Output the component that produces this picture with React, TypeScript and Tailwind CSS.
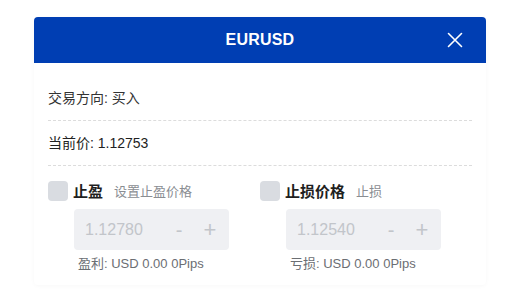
const font = {
  fontFamily: '"Liberation Sans", "Noto Sans CJK SC", sans-serif',
}

function CloseIcon() {
  return (
    <svg width="16" height="16" viewBox="0 0 16 16" fill="none">
      <path
        d="M1.5 1.5L14.5 14.5M14.5 1.5L1.5 14.5"
        stroke="white"
        strokeWidth="1.6"
        strokeLinecap="round"
      />
    </svg>
  )
}

interface OrderFieldProps {
  label: string
  hint: string
  value: string
  result: string
}

function OrderField({ label, hint, value, result }: OrderFieldProps) {
  return (
    <div className="flex flex-col">
      <div className="flex items-center">
        <span className="w-5 h-5 rounded-[4px] bg-[#d9dce1]" />
        <span className="ml-[5px] text-[15px] leading-5 font-bold text-[#1f1f1f] mt-[3px]">
          {label}
        </span>
        <span className="ml-[11px] text-[13px] leading-5 text-[#8a8d92] mt-[3px]">
          {hint}
        </span>
      </div>

      <div className="ml-[26px] mt-[7px] w-[155px] h-[41px] rounded-[4px] bg-[#eff0f3] flex items-center pl-[11px] pr-[9px]">
        <span className="flex-1 text-[16px] text-[#c2c5ca]">{value}</span>
        <span className="text-[20px] leading-none text-[#c2c5ca] w-5 text-center">
          -
        </span>
        <span className="ml-[11px] text-[22px] leading-none text-[#c2c5ca] w-5 text-center">
          +
        </span>
      </div>

      <p className="ml-[30px] mt-[5px] text-[13px] leading-[18px] text-[#6b6e73]">
        {result}
      </p>
    </div>
  )
}

export default function App() {
  return (
    <div className="w-[520px] h-[302px] bg-white pt-[17px] pl-[34px]" style={font}>
      <div className="w-[452px] bg-white shadow-[0_1px_4px_rgba(0,0,0,0.03)] rounded-[4px]">
        <header className="relative h-[46px] rounded-t-[4px] bg-[#003eb3] flex items-center justify-center">
          <h2 className="text-white text-[16px] font-bold tracking-[0.2px]">
            EURUSD
          </h2>
          <button className="absolute right-[23px] top-[15px]">
            <CloseIcon />
          </button>
        </header>

        <div className="px-[14px] pt-[13px] pb-[12px]">
          <div className="py-3 border-b border-dashed border-[#dcdcdc] text-[14px] leading-5 text-[#333]">
            交易方向: 买入
          </div>
          <div className="py-3 border-b border-dashed border-[#dcdcdc] text-[14px] leading-5 text-[#222]">
            当前价: 1.12753
          </div>

          <div className="grid grid-cols-2 mt-[13px]">
            <OrderField
              label="止盈"
              hint="设置止盈价格"
              value="1.12780"
              result="盈利: USD 0.00 0Pips"
            />
            <OrderField
              label="止损价格"
              hint="止损"
              value="1.12540"
              result="亏损: USD 0.00 0Pips"
            />
          </div>
        </div>
      </div>
    </div>
  )
}
